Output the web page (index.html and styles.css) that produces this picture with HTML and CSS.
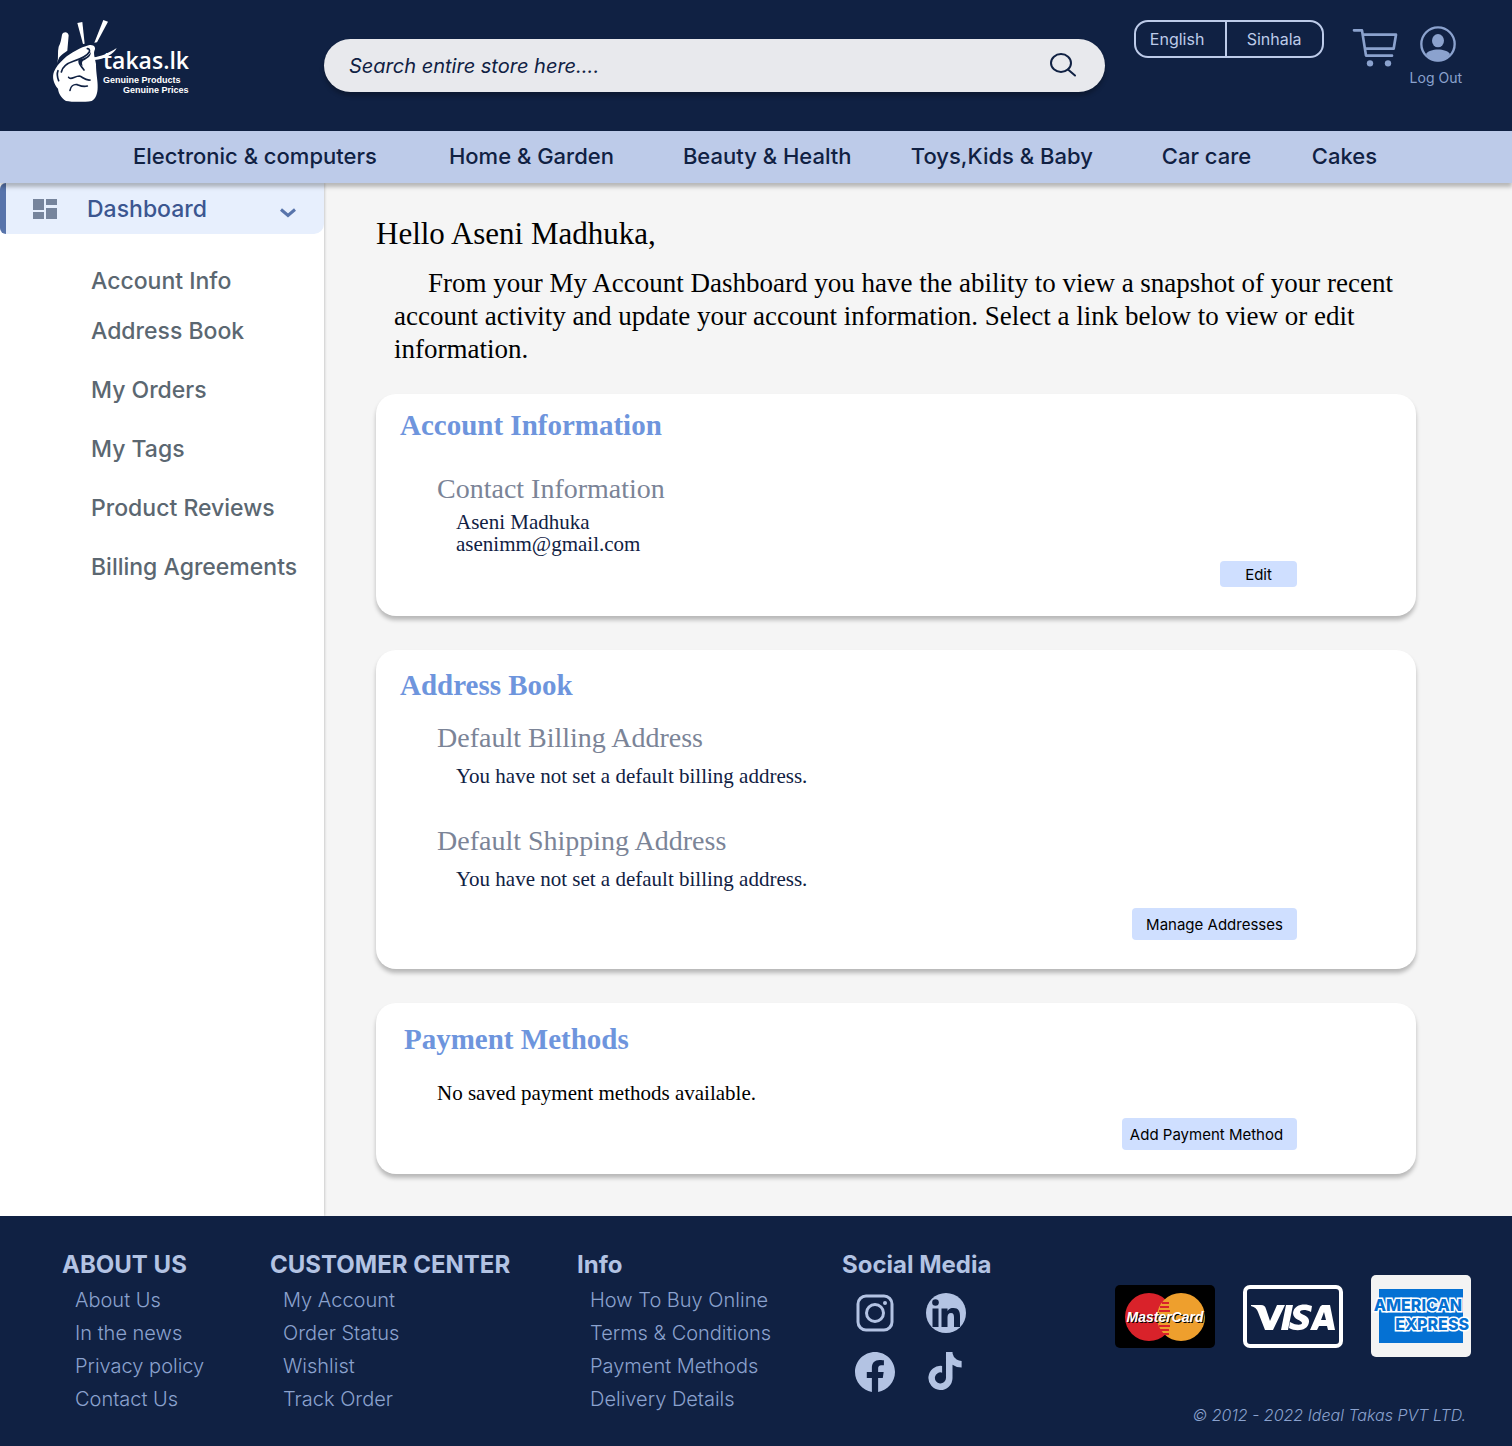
FILE: index.html
```html
<!DOCTYPE html>
<html lang="en">
<head>
<meta charset="utf-8">
<meta name="viewport" content="width=device-width, initial-scale=1">
<title>takas.lk - My Account</title>
<link rel="stylesheet" href="styles.css">
</head>
<body>
<header class="header">
  <a class="logo" href="#" aria-label="takas.lk home">
    <svg width="152" height="92" viewBox="0 0 152 92">
      <g transform="translate(0 -10) scale(.3333)">
        <g fill="#fff">
          <path d="M112 39L127 36L134 101L129 102Z"/>
          <path d="M190 30L204 35L171 97L163 98Z"/>
          <path d="M66 74C70 64 84 64 86 76L82 122C74 128 64 134 58 142C55 148 53 154 52 160C56 142 52 126 56 110C62 100 64 86 66 74Z"/>
          <path d="M146 106C160 102 170 112 163 123C160 132 166 148 168 162C168 192 174 212 173 232C173 250 168 266 155 273C130 277 95 276 78 273C62 262 56 250 54 236C40 220 36 200 42 185C48 172 56 160 72 146C94 128 122 112 146 106Z"/>
          <path d="M160 142C182 140 205 130 230 114C222 132 192 148 164 150Z"/>
        </g>
        <g fill="none" stroke="#102143" stroke-width="5" stroke-linecap="round" stroke-linejoin="round">
          <path d="M64 186C68 168 82 160 100 154C118 148 140 140 148 126C150 118 146 116 142 116"/>
          <path d="M118 150C114 162 124 168 132 180"/>
          <path d="M86 202C92 212 104 198 118 198C128 200 134 212 150 210"/>
          <path d="M90 241C92 230 100 222 112 224C122 228 130 232 142 228"/>
          <path d="M54 182C50 192 52 202 56 212"/>
        </g>
        <path d="M120 148C136 144 146 138 152 126C154 140 140 146 134 150C126 152 124 158 128 168C118 162 116 156 120 148Z" fill="#102143"/>
      </g>
      <text class="logo-name" x="63" y="49">takas.lk</text>
      <text class="logo-tag" x="63" y="63">Genuine Products</text>
      <text class="logo-tag" x="83" y="73">Genuine Prices</text>
    </svg>
  </a>
  <form class="search" role="search">
    <input class="search-input" type="search" aria-label="Search entire store" placeholder="Search entire store here....">
    <button class="search-button" type="button" aria-label="Search">
      <svg width="28" height="26" viewBox="0 0 28 26" fill="none" stroke="#102143" stroke-width="2" stroke-linecap="round"><ellipse cx="12" cy="10" rx="10" ry="9"/><path d="M19 16.500L26 22.500"/></svg>
    </button>
  </form>
  <div class="language">
    <button class="language-option" type="button">English</button>
    <button class="language-option" type="button">Sinhala</button>
  </div>
  <a class="cart" href="#" aria-label="Cart">
    <svg width="46" height="40" viewBox="0 0 138 120" fill="none" stroke="#8ba2ce" stroke-width="8" stroke-linecap="round" stroke-linejoin="round"><path d="M6 7H30L42 83H120M33 20H132L125 62H39"/><circle cx="54" cy="106" r="9.500" fill="#8ba2ce" stroke="none"/><circle cx="108" cy="106" r="9.500" fill="#8ba2ce" stroke="none"/></svg>
  </a>
  <a class="logout" href="#">
    <svg width="36" height="36" viewBox="0 0 108 108"><circle cx="54" cy="54" r="50" fill="none" stroke="#8ba2ce" stroke-width="7"/><ellipse cx="54" cy="44" rx="18" ry="20" fill="#8ba2ce"/><path d="M18 84C28 66 80 66 90 84C80 100 66 106 54 106S28 100 18 84Z" fill="#8ba2ce"/></svg>
    <span>Log Out</span>
  </a>
</header>

<nav class="categories" aria-label="Categories">
  <a href="#">Electronic &amp; computers</a>
  <a href="#">Home &amp; Garden</a>
  <a href="#">Beauty &amp; Health</a>
  <a href="#">Toys,Kids &amp; Baby</a>
  <a href="#">Car care</a>
  <a href="#">Cakes</a>
</nav>

<div class="page">
  <aside class="sidebar">
    <button class="dashboard" type="button">
      <svg width="24" height="20" viewBox="0 0 24 20" fill="#76849c"><path d="M0 0h11v11H0zM13 0h11v6H13zM0 13h11v7H0zM13 9h11v11H13z"/></svg>
      <span>Dashboard</span>
      <svg class="chevron" width="16" height="10" viewBox="0 0 16 10" fill="none" stroke="#5874ab" stroke-width="3"><path d="M1 1.500L8 7.500L15 1.500"/></svg>
    </button>
    <ul class="menu">
      <li><a href="#">Account Info</a></li>
      <li><a href="#">Address Book</a></li>
      <li><a href="#">My Orders</a></li>
      <li><a href="#">My Tags</a></li>
      <li><a href="#">Product Reviews</a></li>
      <li><a href="#">Billing Agreements</a></li>
    </ul>
  </aside>

  <main class="content">
    <h1>Hello Aseni Madhuka,</h1>
    <p class="intro">From your My Account Dashboard you have the ability to view a snapshot of your recent account activity and update your account information. Select a link below to view or edit information.</p>

    <section class="card">
      <h2>Account Information</h2>
      <div class="entry entry-contact">
        <h3>Contact Information</h3>
        <p>Aseni Madhuka<br>asenimm@gmail.com</p>
      </div>
      <button class="action action-small" type="button">Edit</button>
    </section>

    <section class="card card-address">
      <h2>Address Book</h2>
      <div class="entry">
        <h3>Default Billing Address</h3>
        <p>You have not set a default billing address.</p>
      </div>
      <div class="entry">
        <h3>Default Shipping Address</h3>
        <p>You have not set a default billing address.</p>
      </div>
      <button class="action" type="button">Manage Addresses</button>
    </section>

    <section class="card card-payment">
      <h2>Payment Methods</h2>
      <p class="empty">No saved payment methods available.</p>
      <button class="action action-payment" type="button">Add Payment Method</button>
    </section>
  </main>
</div>

<footer class="footer">
  <section>
    <h2>ABOUT US</h2>
    <ul class="links">
      <li><a href="#">About Us</a></li>
      <li><a href="#">In the news</a></li>
      <li><a href="#">Privacy policy</a></li>
      <li><a href="#">Contact Us</a></li>
    </ul>
  </section>
  <section>
    <h2>CUSTOMER CENTER</h2>
    <ul class="links">
      <li><a href="#">My Account</a></li>
      <li><a href="#">Order Status</a></li>
      <li><a href="#">Wishlist</a></li>
      <li><a href="#">Track Order</a></li>
    </ul>
  </section>
  <section>
    <h2>Info</h2>
    <ul class="links">
      <li><a href="#">How To Buy Online</a></li>
      <li><a href="#">Terms &amp; Conditions</a></li>
      <li><a href="#">Payment Methods</a></li>
      <li><a href="#">Delivery Details</a></li>
    </ul>
  </section>
  <section>
    <h2>Social Media</h2>
    <div class="social">
      <a href="#" aria-label="Instagram"><svg width="40" height="40" viewBox="0 0 40 40" fill="none" stroke="#b3c3e3" stroke-width="3"><rect x="3" y="3" width="34" height="34" rx="8"/><circle cx="20" cy="20" r="8.500"/><circle cx="30" cy="10" r="2" fill="#b3c3e3" stroke="none"/></svg></a>
      <a href="#" aria-label="LinkedIn"><svg width="40" height="40" viewBox="0 0 40 40"><circle cx="20" cy="20" r="20" fill="#b3c3e3"/><g fill="#102143"><circle cx="9.500" cy="9.500" r="3.300"/><path d="M6.500 15.500H12.500V34H6.500ZM15.500 15.500H21.500V18C23 15.500 25.200 15 27.500 15C32.500 15 34 18.500 34 23V34H28V24.500C28 22 27.500 20 25 20S21.500 22 21.500 24.500V34H15.500Z"/></g></svg></a>
      <a href="#" aria-label="Facebook"><svg width="40" height="40" viewBox="0 0 24 24" fill="#b3c3e3"><path d="M24 12.073c0-6.627-5.373-12-12-12s-12 5.373-12 12c0 5.990 4.388 10.954 10.125 11.854v-8.385H7.078v-3.470h3.047V9.430c0-3.007 1.792-4.669 4.533-4.669 1.312 0 2.686.235 2.686.235v2.953H15.830c-1.491 0-1.956.925-1.956 1.874v2.250h3.328l-.532 3.470h-2.796v8.385C19.612 23.027 24 18.062 24 12.073z"/></svg></a>
      <a href="#" aria-label="TikTok"><svg width="38" height="38" viewBox="0 0 448 512" fill="#b3c3e3"><path d="M448,209.910a210.060,210.060,0,0,1-122.770-39.250V349.380A162.550,162.550,0,1,1,185,188.310V278.200a74.620,74.620,0,1,0,52.230,71.180V0l88,0a121.180,121.180,0,0,0,1.860,22.170h0A122.180,122.180,0,0,0,381,102.390a121.430,121.430,0,0,0,67,20.140Z"/></svg></a>
    </div>
  </section>
  <section class="legal">
    <div class="payments">
      <svg role="img" aria-label="MasterCard" width="100" height="63" viewBox="0 0 100 63"><rect width="100" height="63" rx="5" fill="#000"/><circle cx="34" cy="32" r="24" fill="#d9222a"/><circle cx="66" cy="32" r="24" fill="#ee9f2d"/><path d="M47 18h7M45 22h9M44 26h11M44 41h11M45 45h9M47 49h7" stroke="#d9222a" stroke-width="2"/><text class="brand-mastercard" x="51" y="38" fill="#000" text-anchor="middle">MasterCard</text><text class="brand-mastercard" x="50" y="37" fill="#fff" text-anchor="middle">MasterCard</text></svg>
      <svg role="img" aria-label="Visa" width="100" height="63" viewBox="0 0 100 63"><rect x="2" y="2" width="96" height="59" rx="5" fill="none" stroke="#fff" stroke-width="4"/><path d="M8 20H18C21 20 22 21 23 24L27 36L34 20H42L30 45H22L15 27C14 24 12 22 8 21ZM43 20H50L45 45H38ZM69 21L68 27C62 24 57 25 57 27C57 30 67 30 66 37C65 46 53 47 46 43L47 37C54 41 59 40 59 38C59 35 50 35 50 28C51 19 62 18 69 21ZM80 20H87L92 45H85L84 41H76L74 45H67L77 22C78 20.500 79 20 80 20ZM81 27L78 35H83Z" fill="#fff" fill-rule="evenodd"/></svg>
      <svg role="img" aria-label="American Express" width="100" height="82" viewBox="0 0 100 82"><rect width="100" height="82" rx="5" fill="#f3f3f3"/><path d="M8 14H92V68H8Z" fill="#0571d3"/><text class="brand-amex" x="91" y="36" text-anchor="end">AMERICAN</text><text class="brand-amex" x="98" y="55" text-anchor="end">EXPRESS</text></svg>
    </div>
    <p class="copyright">© 2012 - 2022 Ideal Takas PVT LTD.</p>
  </section>
</footer>
</body>
</html>
```
FILE: styles.css
```css
* { box-sizing: border-box; }

body {
  margin: 0;
  min-height: 100vh;
  display: flex;
  flex-direction: column;
  background: #f5f5f5;
  color: #000;
  font-family: Inter, "Liberation Sans", sans-serif;
}

h1, h2, h3, p, ul { margin: 0; padding: 0; }
ul { list-style: none; }
a { color: inherit; text-decoration: none; }
button { font: inherit; color: inherit; border: 0; background: none; padding: 0; cursor: pointer; }
svg { display: block; }

/* Header */
.header {
  display: flex;
  align-items: flex-start;
  padding: 20px 50px 0 40px;
  min-height: 131px;
  background: #102143;
}
.logo { flex: none; margin-right: 132px; }
.logo-name { font: 600 23px "Open Sans", sans-serif; fill: #fff; }
.logo-tag { font: 700 9px "Liberation Sans", sans-serif; fill: #fff; }

.search {
  flex: 1;
  display: flex;
  align-items: center;
  height: 53px;
  margin-top: 19px;
  padding: 0 28px 0 25px;
  border-radius: 27px;
  background: #e8e9ed;
  box-shadow: 0 4px 4px rgba(0, 0, 0, .25);
}
.search-input {
  flex: 1;
  min-width: 0;
  padding: 0;
  border: 0;
  outline: 0;
  background: none;
  color: #102143;
  font: italic 400 20px Inter, sans-serif;
}
.search-input::placeholder { color: #102143; opacity: 1; }

.language {
  flex: none;
  display: grid;
  grid-template-columns: 89px 1fr;
  width: 190px;
  height: 38px;
  margin-left: 29px;
  border: 2px solid #bdcbe9;
  border-radius: 14px;
  color: #bdcbe9;
  font-size: 16px;
}
.language-option { padding-right: 6px; }
.language-option + .language-option { padding-right: 0; border-left: 2px solid #bdcbe9; }
.cart { flex: none; margin: 8px 12px 0 28px; }
.logout {
  flex: none;
  display: flex;
  flex-direction: column;
  align-items: center;
  gap: 7px;
  padding-top: 6px;
  color: #8ba2ce;
  font-size: 14px;
  line-height: 18px;
}
.logout svg { margin-left: 4px; }

.categories {
  display: grid;
  grid-template-columns: 316fr 234fr 228fr 251fr 150fr 65fr;
  padding: 0 135px 2px 133px;
  background: #bdcbe9;
  color: #102143;
  font-size: 22px;
  font-weight: 500;
  line-height: 50px;
  white-space: nowrap;
  box-shadow: 0 4px 4px rgba(0, 0, 0, .25);
  z-index: 1;
}

/* Account area */
.page { flex: 1; display: flex; }
.sidebar {
  flex: none;
  width: 324px;
  background: #fff;
  box-shadow: 0 0 3px rgba(0, 0, 0, .3);
}
.dashboard {
  display: flex;
  align-items: center;
  width: 100%;
  height: 51px;
  padding: 0 28px 0 27px;
  border-left: 6px solid #5874ab;
  border-radius: 6px 0 10px 6px;
  background: #e7effd;
  color: #3b5690;
  font-size: 23px;
  font-weight: 500;
}
.dashboard span { margin-left: 30px; }
.chevron { margin: 8px 0 0 auto; }
.menu {
  padding: 32px 0 0 91px;
  color: #5b6771;
  font-size: 23px;
  font-weight: 500;
  line-height: 30px;
}
.menu li + li { margin-top: 20px; }
.menu li + li + li { margin-top: 29px; }

.content {
  flex: 1;
  padding: 32px 96px 41px 52px;
  font-family: "Liberation Serif", serif;
}
h1 { font-size: 31px; font-weight: 400; line-height: 38px; }
.intro {
  padding: 14px 0 28px 18px;
  font-size: 27px;
  line-height: 33px;
  text-indent: 34px;
}

.card {
  display: flex;
  flex-direction: column;
  min-height: 222px;
  padding: 14px 119px 29px 24px;
  border-radius: 20px;
  background: #fff;
  box-shadow: 0 4px 4px rgba(0, 0, 0, .25);
}
.card + .card { margin-top: 34px; }
.card-address { min-height: 319px; padding-top: 18px; }
.card-payment { min-height: 171px; padding: 19px 119px 24px 28px; }
.card h2 { color: #6e95dd; font-size: 29px; font-weight: 700; line-height: 34px; }
.card h3 { color: #7b8497; font-size: 28px; font-weight: 400; line-height: 34px; }
.entry { padding: 19px 0 22px 37px; }
.entry p { padding: 10px 0 0 19px; color: #102143; font-size: 21px; line-height: 22px; }
.entry + .entry { padding: 15px 0 0 37px; }
.entry-contact { padding: 30px 0 0 37px; }
.entry-contact p { padding-top: 5px; }
.empty { padding: 26px 0 0 33px; font-size: 21px; line-height: 22px; }
.action {
  align-self: flex-end;
  margin-top: auto;
  width: 165px;
  height: 32px;
  border-radius: 4px;
  background: #cfdfff;
  font: 400 15px Inter, sans-serif;
}
.action-small { width: 77px; height: 26px; }
.action-payment { width: 175px; padding-right: 6px; }

/* Footer */
.footer {
  display: grid;
  grid-template-columns: 208fr 307fr 265fr 273fr 356fr;
  min-height: 230px;
  padding: 34px 41px 20px 62px;
  background: #102143;
  color: #8ba2ce;
}
.footer h2 { margin-bottom: 4px; color: #b3c3e3; font-size: 24px; font-weight: 700; line-height: 30px; white-space: nowrap; }
.links { padding-left: 13px; font-size: 20px; font-weight: 300; line-height: 33px; white-space: nowrap; }
.social {
  display: grid;
  grid-template-columns: 40px 40px;
  gap: 19px 31px;
  padding: 9px 0 0 13px;
}
.legal { display: flex; flex-direction: column; justify-content: space-between; }
.payments { display: flex; align-items: center; gap: 28px; padding-top: 25px; }
.brand-mastercard { font: italic 700 14px "Liberation Sans", sans-serif; }
.brand-amex {
  font: 800 16px Inter, sans-serif;
  fill: #0571d3;
  stroke: #fff;
  stroke-width: 3px;
  paint-order: stroke;
}
.copyright { padding-right: 5px; font-size: 16px; font-style: italic; font-weight: 300; line-height: 22px; text-align: right; }
```
